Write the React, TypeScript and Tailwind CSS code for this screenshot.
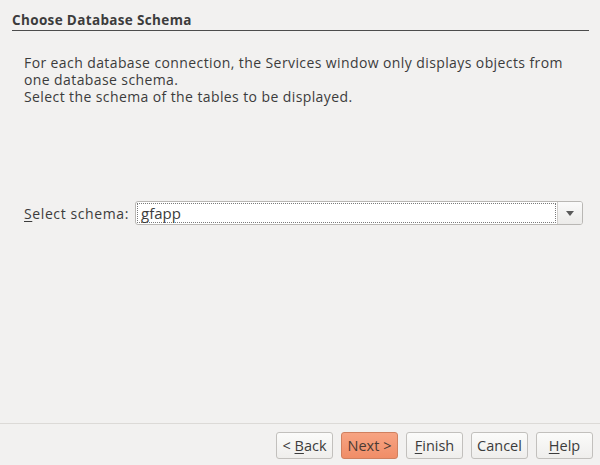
const buttons = [
  { label: "< Back", mn: "B", pre: "<\u00a0", post: "ack", primary: false },
  { label: "Next >", mn: "", pre: "Next >", post: "", primary: true },
  { label: "Finish", mn: "F", pre: "", post: "inish", primary: false },
  { label: "Cancel", mn: "", pre: "Cancel", post: "", primary: false },
  { label: "Help", mn: "H", pre: "", post: "elp", primary: false },
];

function WizardButton({ b }: { b: (typeof buttons)[number] }) {
  return (
    <button
      className={
        b.primary
          ? "w-[57px] h-[27px] rounded-[3px] border border-[#d0805f] bg-gradient-to-b from-[#f7a483] to-[#f08d67] text-[#4a3a33] text-[14.5px] flex items-center justify-center"
          : "w-[57px] h-[27px] rounded-[3px] border border-[#c2c0bd] bg-gradient-to-b from-[#fbfbfa] to-[#efeeec] text-[#3c3c3c] text-[14.5px] flex items-center justify-center"
      }>
      {b.pre}
      {b.mn && <span className="underline underline-offset-2">{b.mn}</span>}
      {b.post}
    </button>
  );
}

export default function App() {
  return (
    <div
      className="w-[600px] h-[465px] bg-[#f2f1f0] text-[#3c3c3c] flex flex-col"
      style={{ fontFamily: '"Open Sans", "DejaVu Sans", sans-serif' }}>
      <div className="px-3 pt-[11px]">
        <h1 className="text-[13.5px] font-bold leading-[18px] pb-[1px] border-b border-[#4c4c4c] w-[577px] tracking-[0.35px]">
          Choose Database Schema
        </h1>
      </div>
      <div className="pl-[24px] pr-[10px] pt-[23px] text-[14px] leading-[17px] tracking-[0.4px]">
        <p>
          For each database connection, the Services window only displays objects from
          <br />
          one database schema.
        </p>
        <p>Select the schema of the tables to be displayed.</p>
      </div>
      <div className="flex items-center pl-[24px] mt-[96px]">
        <label className="text-[14px] w-[111px] tracking-[0.6px]">
          <span className="underline underline-offset-2">S</span>elect schema:
        </label>
        <div className="flex w-[448px] h-[24px] rounded-[3px] border border-[#b9b7b4] bg-white overflow-hidden">
          <div className="flex-1 m-[1px] border border-dotted border-[#7a7a7a] text-[15px] leading-[18px] pl-[3px]">
            gfapp
          </div>
          <div className="w-[25px] bg-gradient-to-b from-[#fafafa] to-[#ecebe9] border-l border-[#d0cecb] flex items-center justify-center">
            <svg width="8" height="5" viewBox="0 0 8 5">
              <path d="M0 0 L8 0 L4 5 Z" fill="#5a5a5a" />
            </svg>
          </div>
        </div>
      </div>
      <div className="flex-1" />
      <div className="border-t border-[#dcdad7]" />
      <div className="flex justify-end gap-[8px] pr-[7px] pt-[8px] pb-[6px]">
        {buttons.map((b) => (
          <WizardButton key={b.label} b={b} />
        ))}
      </div>
    </div>
  );
}
